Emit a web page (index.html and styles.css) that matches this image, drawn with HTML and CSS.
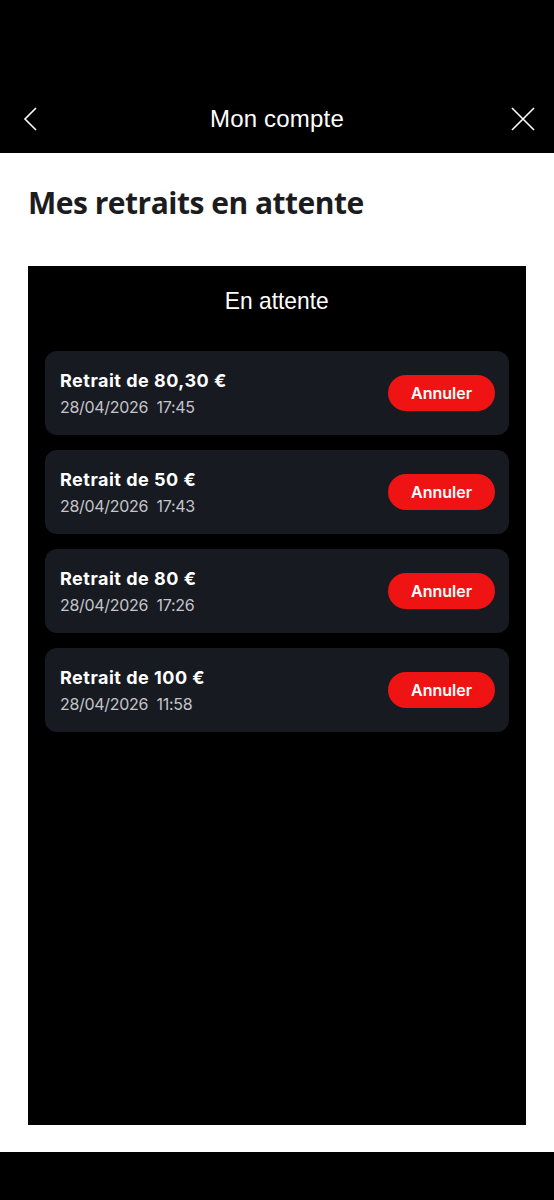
FILE: index.html
```html
<!DOCTYPE html>
<html lang="fr">
<head>
    <meta charset="UTF-8">
    <meta name="viewport" content="width=device-width, initial-scale=1.0">
    <title>Mon compte</title>
    <link rel="stylesheet" href="styles.css">
</head>
<body>
<div class="topbar">
    <div class="nav">
        <svg class="nav-icon" width="24" height="24" viewBox="0 0 24 24">
            <path d="M17 1 L6 12 L17 23" fill="none" stroke="#fff" stroke-width="1.6"/>
        </svg>
        <div class="nav-title">Mon compte</div>
        <svg class="nav-icon" width="24" height="24" viewBox="0 0 24 24">
            <path d="M1 1 L23 23 M23 1 L1 23" fill="none" stroke="#fff" stroke-width="1.6"/>
        </svg>
    </div>
</div>

<div class="content">
    <h1>Mes retraits en attente</h1>
    <div class="panel">
        <h2><span>En attente</span></h2>
        <div class="list">
            <div class="item">
                <div class="item-info">
                    <div class="item-title">Retrait de 80,30 €</div>
                    <div class="item-date">28/04/2026&nbsp; 17:45</div>
                </div>
                <button class="cancel">Annuler</button>
            </div>
            <div class="item">
                <div class="item-info">
                    <div class="item-title">Retrait de 50 €</div>
                    <div class="item-date">28/04/2026&nbsp; 17:43</div>
                </div>
                <button class="cancel">Annuler</button>
            </div>
            <div class="item">
                <div class="item-info">
                    <div class="item-title">Retrait de 80 €</div>
                    <div class="item-date">28/04/2026&nbsp; 17:26</div>
                </div>
                <button class="cancel">Annuler</button>
            </div>
            <div class="item">
                <div class="item-info">
                    <div class="item-title">Retrait de 100 €</div>
                    <div class="item-date">28/04/2026&nbsp; 11:58</div>
                </div>
                <button class="cancel">Annuler</button>
            </div>
        </div>
    </div>
</div>

<div class="bottombar"></div>
</body>
</html>
```

FILE: styles.css
```css
body {
    margin: 0;
    font-family: 'Roboto', 'Liberation Sans', sans-serif;
    background-color: #fff;
}

.topbar {
    background-color: #000;
    height: 153px;
    display: flex;
    flex-direction: column;
    justify-content: flex-end;
}

.nav {
    height: 68px;
    box-sizing: border-box;
    display: flex;
    align-items: center;
    justify-content: space-between;
    padding: 0 19px;
}

.nav-icon {
    display: block;
}

.nav-title {
    color: #fff;
    font-family: 'Liberation Sans', sans-serif;
    font-size: 24px;
    letter-spacing: 0.2px;
}

.content {
    height: 999px;
    padding: 0 28px;
    box-sizing: border-box;
    display: flex;
    flex-direction: column;
}

.content h1 {
    font-family: 'Open Sans', sans-serif;
    font-weight: 700;
    font-size: 30px;
    letter-spacing: -0.5px;
    color: #1c1c1e;
    margin: 30px 0 0 0;
    line-height: 40px;
}

.panel {
    background-color: #000;
    margin-top: 43px;
    height: 859px;
    padding: 0 17px;
}

.panel h2 {
    font-family: 'Liberation Sans', sans-serif;
    font-weight: 400;
    font-size: 24px;
    color: #fff;
    text-align: center;
    margin: 20px 0 0 0;
    line-height: 30px;
}

.panel h2 span {
    display: inline-block;
    transform: scaleX(0.95);
}

.list {
    margin-top: 35px;
    display: flex;
    flex-direction: column;
    gap: 15px;
}

.item {
    background-color: #181a21;
    border-radius: 12px;
    height: 84px;
    display: flex;
    align-items: center;
    justify-content: space-between;
    padding: 0 14px 0 15px;
}

.item-title {
    font-family: 'Inter', sans-serif;
    font-weight: 700;
    font-size: 18px;
    letter-spacing: 0.5px;
    color: #fff;
    line-height: 24px;
}

.item-date {
    font-family: 'Inter', sans-serif;
    font-size: 16px;
    letter-spacing: -0.3px;
    color: #c4c5ca;
    margin-top: 4px;
    line-height: 20px;
}

.cancel {
    background-color: #f01313;
    color: #fff;
    border: none;
    border-radius: 18px;
    width: 107px;
    height: 36px;
    font-family: 'Inter', sans-serif;
    font-weight: 600;
    font-size: 16px;
}

.bottombar {
    background-color: #000;
    height: 48px;
}
```
